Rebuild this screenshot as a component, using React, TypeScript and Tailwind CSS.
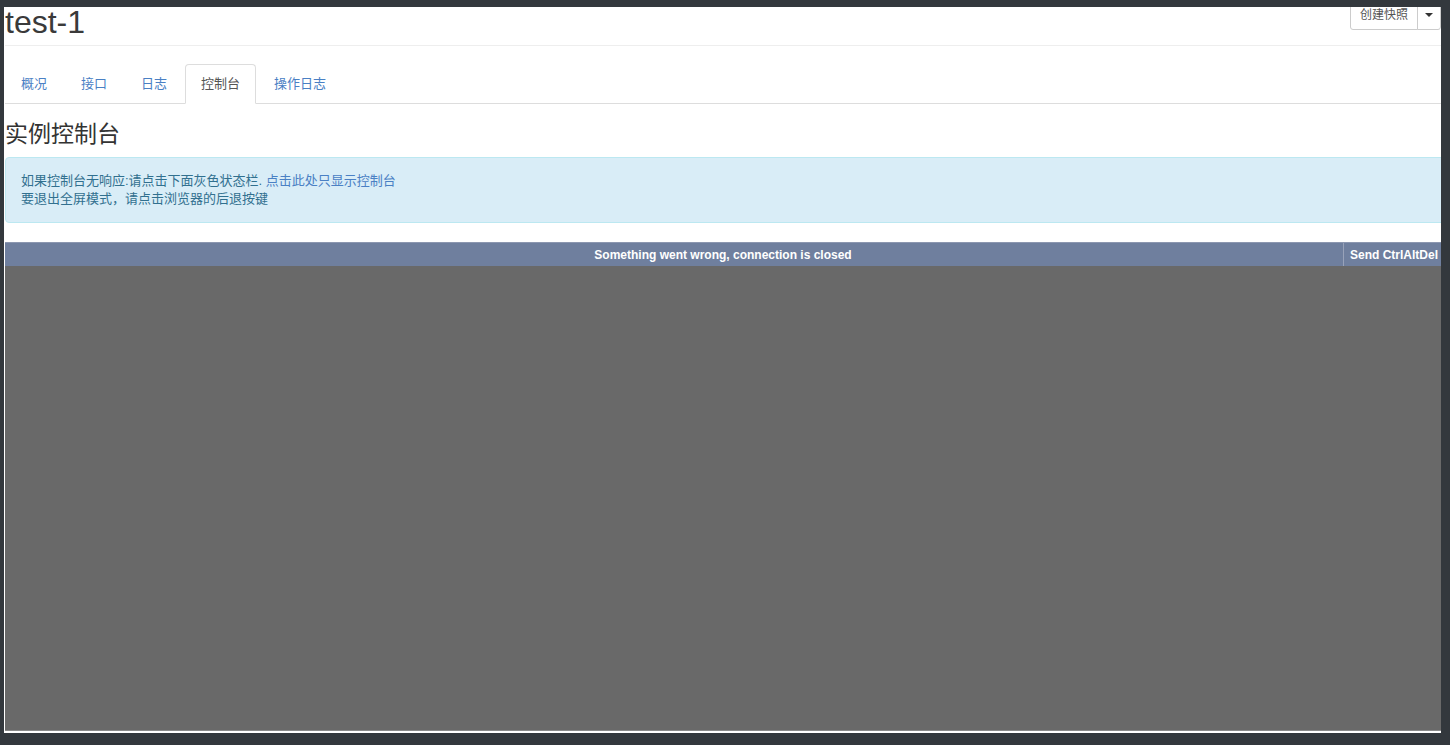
const tabs = ['概况', '接口', '日志', '控制台', '操作日志'];
const activeTab = '控制台';

const font = { fontFamily: '"Liberation Sans", Arial, "Noto Sans CJK SC", sans-serif' };

export default function App() {
  return (
    <div className="h-[745px] w-[1450px] overflow-hidden bg-[#33383d] pt-[7px] pl-[4px]" style={font}>
      <div className="relative flex h-[726px] w-[1437px] flex-col overflow-hidden bg-white pl-px text-[#333]">
        {/* page header */}
        <div className="flex h-[39px] shrink-0 items-start justify-between border-b border-[#eee]">
          <h1 className="pt-px text-[32px] leading-[28px] font-normal text-[#3a3a3a]">test-1</h1>
          <div className="mt-[-7px] flex h-[30px]">
            <button
              type="button"
              className="rounded-l-[3px] border border-[#ccc] bg-white px-[9px] text-[12px] text-[#555]"
            >
              创建快照
            </button>
            <button
              type="button"
              className="-ml-px flex w-[24px] items-center justify-center rounded-r-[3px] border border-[#ccc] bg-white"
            >
              <span className="h-0 w-0 border-x-[4px] border-t-[4px] border-x-transparent border-t-[#333]" />
            </button>
          </div>
        </div>

        {/* tabs */}
        <ul className="mt-[18px] flex h-[40px] shrink-0 border-b border-[#ddd] text-[13px]">
          {tabs.map((tab) => {
            const active = tab === activeTab;
            return (
              <li key={tab} className="mr-[2px] -mb-px">
                <a
                  className={`flex h-[40px] items-center rounded-t-[4px] border px-[15px] ${
                    active
                      ? 'border-[#ddd] border-b-transparent bg-white text-[#555]'
                      : 'border-transparent text-[#4a80c4]'
                  }`}
                >
                  {tab}
                </a>
              </li>
            );
          })}
        </ul>

        <h3 className="mt-[17px] mb-[10px] text-[23px] leading-[26px] font-normal">实例控制台</h3>

        {/* hint */}
        <div className="w-[1450px] shrink-0 rounded-[4px] border border-[#bce8f1] bg-[#d9edf7] px-[15px] py-[14px] text-[13px] leading-[18px] text-[#31708f]">
          <p>
            如果控制台无响应:请点击下面灰色状态栏.{' '}
            <a className="text-[#4a80c4]">点击此处只显示控制台</a>
          </p>
          <p>要退出全屏模式，请点击浏览器的后退按键</p>
        </div>

        {/* console */}
        <div className="mt-[19px] flex min-h-0 flex-1 flex-col">
          <div className="relative flex h-[24px] shrink-0 items-center justify-center border-t border-[#8c97b0] bg-[#6f7f9e] text-[12px] font-bold text-white">
            <span>Something went wrong, connection is closed</span>
            <button
              type="button"
              className="absolute top-0 right-0 h-full border-l border-[#98a2b9] pr-[3px] pl-[6px] text-[12px] font-bold text-white"
            >
              Send CtrlAltDel
            </button>
          </div>
          <div className="flex-1 border-b border-[#8a8a8a] bg-[#696969]" />
          <div className="h-[2px] shrink-0" />
        </div>
      </div>
    </div>
  );
}
